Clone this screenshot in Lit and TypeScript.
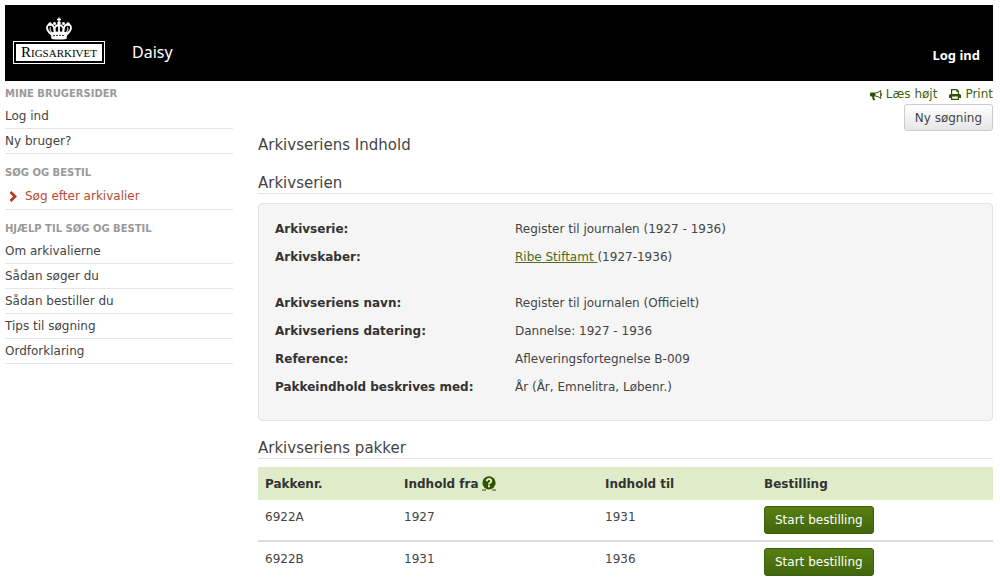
import { LitElement, html, css, svg } from "lit";
import { customElement } from "lit/decorators.js";

interface MenuItem {
  label: string;
  active?: boolean;
}

interface MenuGroup {
  title: string;
  items: MenuItem[];
}

const menu: MenuGroup[] = [
  { title: "Mine brugersider", items: [{ label: "Log ind" }, { label: "Ny bruger?" }] },
  { title: "Søg og bestil", items: [{ label: "Søg efter arkivalier", active: true }] },
  {
    title: "Hjælp til søg og bestil",
    items: [
      { label: "Om arkivalierne" },
      { label: "Sådan søger du" },
      { label: "Sådan bestiller du" },
      { label: "Tips til søgning" },
      { label: "Ordforklaring" },
    ],
  },
];

const packages = [
  { id: "6922A", from: "1927", to: "1931" },
  { id: "6922B", from: "1931", to: "1936" },
];

const crown = svg`
  <path d="M12.300 0h1.400v1.300H15v1.400h-1.300V4h-1.400V2.700H11V1.300h1.300z" />
  <circle cx="13" cy="5.500" r="1.800" />
  <g fill="none" stroke="#fff" stroke-width="1.800">
    <path d="M5.500 17C-.8 12 .2 7 4.300 7c3 0 4.500 3 4.700 9" />
    <path d="M20.500 17c6.300-5 5.300-10 1.200-10-3 0-4.500 3-4.700 9" />
    <path d="M9 16C7 11 9.500 7.500 13 7.500s6 3.500 4 8.500" />
    <path d="M13 8v8" />
  </g>
  <g fill="none" stroke="#ccc" stroke-width="1.200">
    <path d="M6.500 16Q3 12 4.500 9.500M19.500 16q3.500-4 2-6.500" />
  </g>
  <circle cx="4" cy="6.500" r="1.700" /><circle cx="22" cy="6.500" r="1.700" />
  <circle cx="8.500" cy="6" r="1.500" /><circle cx="17.500" cy="6" r="1.500" />
  <path d="M4.500 15q8.500-2 17 0l-1 6.500q-7.500 1-15 0z" />
  <path d="M7 18.300q6-1 12 0" stroke="#000" stroke-width=".8" stroke-dasharray="2 1" fill="none" />`;

@customElement("app-root")
export class AppRoot extends LitElement {
  static styles = css`
    :host {
      display: block;
      padding: 5px 7px 0 5px;
      background: #fff;
      color: #444;
      font: 12px/20px Verdana, "DejaVu Sans", sans-serif;
    }
    * { box-sizing: border-box; }
    a { color: inherit; text-decoration: none; }
    h1, h2, h3, ul, dl, dd { margin: 0; padding: 0; font-weight: 400; }
    svg { display: block; flex: none; }

    .header {
      display: flex;
      align-items: flex-start;
      height: 76px;
      padding: 12px 13px 0 8px;
      background: #000;
      color: #fff;
    }
    .logo { display: flex; flex-direction: column; align-items: center; gap: 1px; }
    .plate { border: 1px solid #fff; padding: 2px; }
    .word {
      display: block;
      padding: 0 5px;
      background: #fff;
      color: #000;
      font: 15px/17px "Liberation Serif", serif;
      font-variant: small-caps;
    }
    .site { margin: 23px auto 0 27px; font: 16px/24px "Noto Sans", sans-serif; }
    .login { margin-top: 28px; font: bold 13px/20px "Noto Sans", sans-serif; }

    .layout {
      display: grid;
      grid-template-columns: 228px minmax(0, 1fr);
      column-gap: 25px;
    }
    .menu { display: flex; flex-direction: column; gap: 6px; }
    .group-title {
      padding-top: 3px;
      color: #999;
      font-size: 10px;
      line-height: 20px;
      font-weight: 700;
      text-transform: uppercase;
    }
    .items { list-style: none; }
    .item { border-bottom: 1px solid #e5e5e5; }
    .link { display: flex; align-items: center; gap: 8px; padding: 1px 0; line-height: 22px; }
    .active { gap: 7px; padding: 2px 0 1px 4px; line-height: 23px; color: #b94a33; }

    .tools { display: flex; justify-content: flex-end; gap: 12px; padding-top: 4px; color: #3f5f0c; }
    .tool { display: flex; align-items: center; gap: 4px; line-height: 19px; }
    .actions { display: flex; justify-content: flex-end; }
    .btn {
      height: 27px;
      padding: 0 10px;
      border: 1px solid #ccc;
      border-radius: 3px;
      background: linear-gradient(#fff, #e6e6e6);
      color: #444;
      font: inherit;
    }
    .order {
      display: block;
      height: 28px;
      border-color: #3c5f0d;
      background: linear-gradient(#55800f, #42650e);
      color: #fff;
    }
    .title { margin-top: 3px; font-size: 15px; line-height: 22px; }
    .section {
      margin-top: 17px;
      border-bottom: 1px solid #e5e5e5;
      font-size: 15px;
      line-height: 20px;
    }
    .panel {
      display: grid;
      gap: 18px;
      margin-top: 9px;
      padding: 11px 16px 19px;
      border: 1px solid #e3e3e3;
      border-radius: 4px;
      background: #f5f5f5;
    }
    .facts { display: grid; grid-template-columns: 240px minmax(0, 1fr); line-height: 28px; }
    .term { color: #333; font-weight: 700; }
    .creator { color: #4d6b1c; text-decoration: underline; white-space: pre; }

    .packages { width: 100%; margin-top: 8px; border-collapse: collapse; table-layout: fixed; }
    .c1 { width: 139px; }
    .c2 { width: 201px; }
    .c3 { width: 159px; }
    .packages th {
      height: 33px;
      padding: 0 7px;
      background: #dfebc9;
      color: #333;
      text-align: left;
    }
    .packages td { padding: 6px 7px; line-height: 22px; vertical-align: top; }
    .packages tr + tr td { border-top: 2px solid #ddd; }
    .help-head { display: flex; align-items: center; gap: 3px; }
  `;

  render() {
    return html`
      <header class="header">
        <a class="logo" href="#" aria-label="Rigsarkivet">
          <svg width="26" height="23" viewBox="0 0 26 22" fill="#fff">${crown}</svg>
          <span class="plate"><span class="word">Rigsarkivet</span></span>
        </a>
        <a class="site" href="#">Daisy</a>
        <a class="login" href="#">Log ind</a>
      </header>
      <div class="layout">
        <nav class="menu">
          ${menu.map(
            (group) => html`<section>
              <h3 class="group-title">${group.title}</h3>
              <ul class="items">
                ${group.items.map(
                  (item) => html`<li class="item">
                    <a class="link ${item.active ? "active" : ""}" href="#">${item.active
                      ? html`<svg width="9" height="11" viewBox="0 0 9 11">
                          <path d="M1.500 1l4.500 4.500L1.500 10" fill="none" stroke="#b93a22" stroke-width="2.800" />
                        </svg>`
                      : ""}${item.label}</a>
                  </li>`
                )}
              </ul>
            </section>`
          )}
        </nav>
        <main>
          <div class="tools">
            <a class="tool" href="#">
              <svg width="12" height="12" viewBox="0 0 12 12" fill="#2f5200">
                <path d="M1 3.500h4.500v4H4.200q-.4 1 .2 1.800.7.700.9 1.300Q4.500 11.800 3 11 1.900 9 2.200 7.500H1q-1 0-1-1v-2q0-1 1-1z" />
                <path d="M5.500 4Q8.500 3.600 10.700 1.500v8Q8.500 7.400 5.500 7" fill="none" stroke="#2f5200" />
                <rect x="11" y="4.500" width="1" height="2" />
              </svg>Læs højt</a>
            <a class="tool" href="#">
              <svg width="12" height="11" viewBox="0 0 12 11" fill="#2f5200">
                <path d="M2 0h6l2 2v3h.5Q12 5 12 6.500V9h-2v2H2V9H0V6.500Q0 5 1.500 5H2zM3.200 1.200V5h5.600V2.700H7.300V1.200zM3.200 7.500v2.300h5.600V7.500z" fill-rule="evenodd" />
              </svg>Print</a>
          </div>
          <div class="actions"><button class="btn" type="button">Ny søgning</button></div>
          <h1 class="title">Arkivseriens Indhold</h1>
          <h2 class="section">Arkivserien</h2>
          <div class="panel">
            <dl class="facts">
              <dt class="term">Arkivserie:</dt>
              <dd>Register til journalen (1927 - 1936)</dd>
              <dt class="term">Arkivskaber:</dt>
              <dd><a class="creator" href="#">Ribe Stiftamt </a>(1927-1936)</dd>
            </dl>
            <dl class="facts">
              <dt class="term">Arkivseriens navn:</dt>
              <dd>Register til journalen (Officielt)</dd>
              <dt class="term">Arkivseriens datering:</dt>
              <dd>Dannelse: 1927 - 1936</dd>
              <dt class="term">Reference:</dt>
              <dd>Afleveringsfortegnelse B-009</dd>
              <dt class="term">Pakkeindhold beskrives med:</dt>
              <dd>År (År, Emnelitra, Løbenr.)</dd>
            </dl>
          </div>
          <h2 class="section">Arkivseriens pakker</h2>
          <table class="packages">
            <colgroup><col class="c1" /><col class="c2" /><col class="c3" /><col /></colgroup>
            <thead>
              <tr>
                <th>Pakkenr.</th>
                <th>
                  <span class="help-head">Indhold fra
                    <a href="#" aria-label="Hjælp">
                      <svg width="14" height="15" viewBox="0 0 14 15">
                        <circle cx="7" cy="6.800" r="6.600" fill="#2f5200" />
                        <path d="M4.600 5.200Q5 3 7 3t2.200 1.900Q9.200 6.200 7.900 6.800 7 7.200 7 8.400M7 9.200v2" fill="none" stroke="#dfebc9" stroke-width="2" />
                        <path d="M0 14h4M10 14h4" stroke="#2f5200" />
                      </svg>
                    </a>
                  </span>
                </th>
                <th>Indhold til</th>
                <th>Bestilling</th>
              </tr>
            </thead>
            <tbody>
              ${packages.map(
                (p) => html`<tr>
                  <td>${p.id}</td>
                  <td>${p.from}</td>
                  <td>${p.to}</td>
                  <td><button class="btn order" type="button">Start bestilling</button></td>
                </tr>`
              )}
            </tbody>
          </table>
        </main>
      </div>
    `;
  }
}
